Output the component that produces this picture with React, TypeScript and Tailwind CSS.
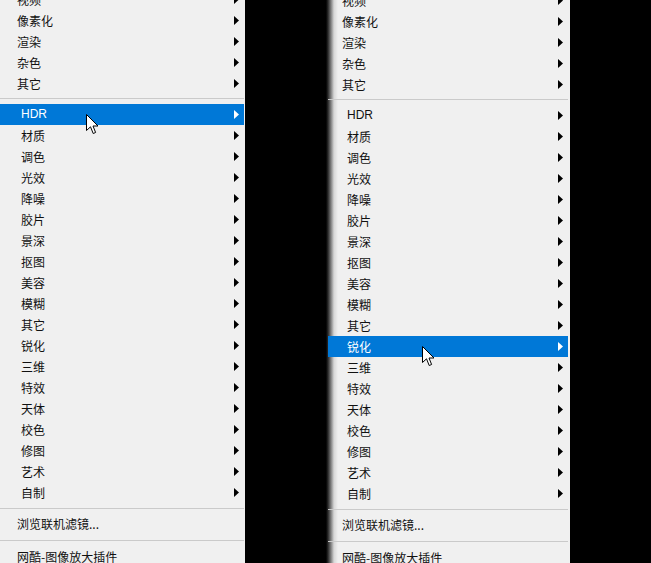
const topItems = ["视频", "像素化", "渲染", "杂色", "其它"];
const midItems = [
  "HDR",
  "材质",
  "调色",
  "光效",
  "降噪",
  "胶片",
  "景深",
  "抠图",
  "美容",
  "模糊",
  "其它",
  "锐化",
  "三维",
  "特效",
  "天体",
  "校色",
  "修图",
  "艺术",
  "自制",
];

function Arrow({ active }: { active: boolean }) {
  return (
    <svg width="5" height="9" viewBox="0 0 5 9" className="shrink-0">
      <path d="M0 0 L5 4.5 L0 9 Z" fill={active ? "#ffffff" : "#000000"} />
    </svg>
  );
}

function Cursor() {
  return (
    <svg width="13" height="21" viewBox="0 0 13 21">
      <path
        d="M0.5 0.5 L0.5 16.5 L4.5 12.8 L7.2 19.5 L9.6 18.5 L7 12 L12 12 Z"
        fill="#ffffff"
        stroke="#000000"
        strokeWidth="1"
        strokeLinejoin="miter"
      />
    </svg>
  );
}

function Row({
  label,
  indent,
  active,
  arrow,
  cursor,
}: {
  label: string;
  indent: string;
  active?: boolean;
  arrow?: boolean;
  cursor?: string;
}) {
  const latin = /^[A-Z]+$/.test(label);
  return (
    <div
      className={`relative flex h-[21px] items-center pr-[5px] ${indent} ${
        active ? "bg-[#0078d7] text-white" : "text-[#111111]"
      }`}
    >
      <span
        className={`flex-1 text-[12px] leading-[21px] ${
          latin ? "font-['Liberation_Sans',sans-serif]" : ""
        }`}
      >
        {label}
      </span>
      {arrow && <Arrow active={!!active} />}
      {cursor && (
        <div className={`absolute top-[10px] ${cursor}`}>
          <Cursor />
        </div>
      )}
    </div>
  );
}

function Menu({
  side,
  activeIndex,
  cursorX,
}: {
  side: "left" | "right";
  activeIndex: number;
  cursorX: string;
}) {
  const left = side === "left";
  // text indents: top/bottom groups vs. the filter sub-group
  const a = left ? "pl-[17px]" : "pl-[14px]";
  const b = left ? "pl-[21px]" : "pl-[19px]";
  const rowMargin = left ? "mr-[1px]" : "ml-[2px] mr-[2px]";
  return (
    <div
      className={`h-full overflow-hidden ${
        left
          ? "w-[245px] bg-[#f0f0f0]"
          : "w-[244px] bg-[linear-gradient(to_right,#000000_0px,#2a2a2a_2px,#d8d8d8_8px,#f0f0f0_12px)]"
      }`}
      style={{ fontFamily: '"Noto Sans CJK SC", "Microsoft YaHei", sans-serif' }}
    >
      <div className={left ? "-mt-[11px]" : "-mt-[10px]"}>
        {topItems.map((t) => (
          <div key={t} className={rowMargin}>
            <Row label={t} indent={a} arrow />
          </div>
        ))}
        <div className={`${rowMargin} pt-[4px] pb-[5px]`}>
          <div className="h-px bg-[#cacaca]" />
        </div>
        {midItems.map((t, i) => (
          <div key={t + i} className={rowMargin}>
            <Row
              label={t}
              indent={b}
              arrow
              active={i === activeIndex}
              cursor={i === activeIndex ? cursorX : undefined}
            />
          </div>
        ))}
        <div className={`${rowMargin} pt-[5px] pb-[4px]`}>
          <div className="h-px bg-[#cacaca]" />
        </div>
        <div className={rowMargin}>
          <Row label="浏览联机滤镜..." indent={a} />
        </div>
        <div className={`${rowMargin} pt-[6px] pb-[5px]`}>
          <div className="h-px bg-[#cacaca]" />
        </div>
        <div className={rowMargin}>
          <Row label="网酷-图像放大插件" indent={a} />
        </div>
      </div>
    </div>
  );
}

export default function App() {
  return (
    <div className="flex h-[563px] w-[651px] overflow-hidden bg-black">
      <Menu side="left" activeIndex={0} cursorX="left-[86px]" />
      <div className="w-[81px] shrink-0" />
      <Menu side="right" activeIndex={11} cursorX="left-[94px]" />
    </div>
  );
}
